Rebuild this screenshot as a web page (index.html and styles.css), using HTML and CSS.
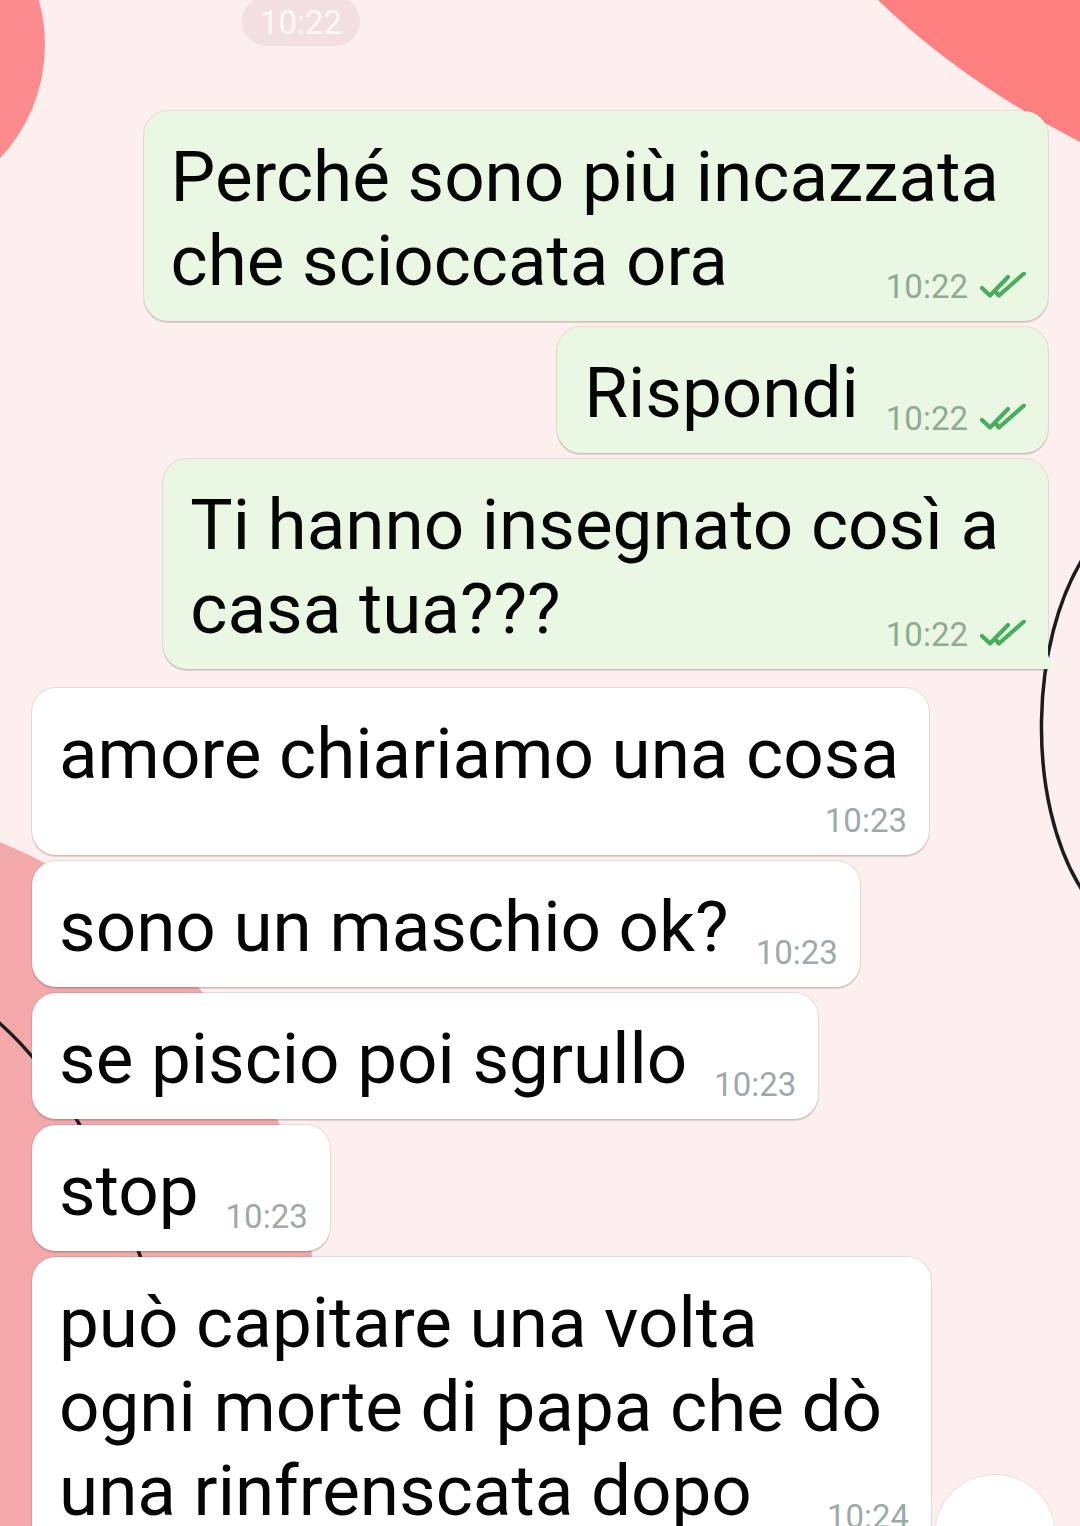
FILE: index.html
```html
<!DOCTYPE html>
<html lang="it">
<head>
<meta charset="utf-8">
<title>Chat</title>
<link rel="stylesheet" href="styles.css">
</head>
<body>
<div class="screen">
  <svg class="wallpaper" width="1080" height="1526" viewBox="0 0 1080 1526" aria-hidden="true">
    <circle cx="-120" cy="45" r="165" fill="#fb8b8c"/>
    <path d="M878 0 Q 960 80 1080 142 L1080 0 Z" fill="#fd7f7f"/>
    <circle cx="-190" cy="1310" r="505" fill="#f3a8a9"/>
    <path d="M1085 555 C1030 640 1025 800 1082 890" stroke="#1c1c1c" stroke-width="3.5" fill="none"/>
    <path d="M-10 1015 Q 95 1100 165 1330" stroke="#1c1c1c" stroke-width="3.5" fill="none"/>
  </svg>

  <div class="chat">
    <div class="date-pill">10:22</div>

    <div class="bubble out">
      <div class="text">Perché sono più incazzata<br>che scioccata ora</div>
      <div class="meta overlap"><span class="time">10:22</span><svg class="ticks" width="46" height="26" viewBox="0 0 46 26"><path d="M2 16 L10 23.5 L28 5" /><path d="M15 19 L19 23.5 L44 1.5" /></svg></div>
    </div>

    <div class="bubble out row">
      <div class="text">Rispondi</div>
      <div class="meta"><span class="time">10:22</span><svg class="ticks" width="46" height="26" viewBox="0 0 46 26"><path d="M2 16 L10 23.5 L28 5" /><path d="M15 19 L19 23.5 L44 1.5" /></svg></div>
    </div>

    <div class="bubble out tail">
      <div class="text">Ti hanno insegnato così a<br>casa tua???</div>
      <div class="meta overlap"><span class="time">10:22</span><svg class="ticks" width="46" height="26" viewBox="0 0 46 26"><path d="M2 16 L10 23.5 L28 5" /><path d="M15 19 L19 23.5 L44 1.5" /></svg></div>
    </div>

    <div class="bubble in group-start">
      <div class="text narrow">amore chiariamo una cosa</div>
      <div class="meta below"><span class="time">10:23</span></div>
    </div>

    <div class="bubble in row">
      <div class="text">sono un maschio ok?</div>
      <div class="meta"><span class="time">10:23</span></div>
    </div>

    <div class="bubble in row">
      <div class="text">se piscio poi sgrullo</div>
      <div class="meta"><span class="time">10:23</span></div>
    </div>

    <div class="bubble in row">
      <div class="text">stop</div>
      <div class="meta"><span class="time">10:23</span></div>
    </div>

    <div class="bubble in">
      <div class="text">può capitare una volta<br>ogni morte di papa che dò<br>una rinfrenscata dopo</div>
      <div class="meta overlap"><span class="time">10:24</span></div>
    </div>
  </div>

  <div class="fab"></div>
</div>
</body>
</html>
```

FILE: styles.css
```css
html, body {
  margin: 0;
  padding: 0;
}

body {
  font-family: Roboto, "Noto Sans", "Liberation Sans", sans-serif;
  color: #050505;
}

.screen {
  position: relative;
  width: 1080px;
  height: 1526px;
  overflow: hidden;
  background: #fdefee;
}

.wallpaper {
  position: absolute;
  left: 0;
  top: 0;
  z-index: 0;
}

.chat {
  position: relative;
  z-index: 1;
  display: flex;
  flex-direction: column;
  gap: 6px;
}

.date-pill {
  align-self: flex-start;
  margin: -4px 0 59px 242px;
  width: 118px;
  height: 50px;
  border-radius: 25px;
  background: #f3dfdf;
  color: #fefafa;
  font-size: 33px;
  line-height: 50px;
  text-align: center;
  padding-top: 2px;
  box-sizing: border-box;
}

.bubble {
  position: relative;
  padding: 24px 22px 18px 27px;
  border-radius: 24px;
  box-shadow: 0 0 0 1px rgba(90, 70, 60, 0.13), 0 1.5px 1px rgba(90, 60, 60, 0.18);
}

.bubble.out {
  align-self: flex-end;
  margin-right: 32px;
  background: #eaf8e3;
}

.bubble.in {
  align-self: flex-start;
  margin-left: 32px;
  background: #ffffff;
}

.bubble.group-start {
  margin-top: 13px;
}

.bubble.row {
  display: flex;
  align-items: flex-end;
}

.text {
  font-size: 71px;
  line-height: 84px;
  white-space: nowrap;
  margin-right: 27px;
}

.text.narrow {
  margin-right: 8px;
}

.meta {
  display: flex;
  align-items: baseline;
  justify-content: flex-end;
  height: 33px;
  line-height: 33px;
  font-size: 33px;
}

.meta.overlap {
  margin-top: -33px;
}

.meta.below {
  margin-top: 8px;
  margin-right: 0;
}

.bubble.out .time {
  color: #8fab91;
}

.bubble.in .time {
  color: #9caaa9;
}

.ticks {
  margin-left: 12px;
  fill: none;
  stroke: #48ad5c;
  stroke-width: 4.2;
  stroke-linecap: round;
  stroke-linejoin: round;
}

.bubble.tail {
  border-bottom-right-radius: 0;
}

.bubble.tail::after {
  content: "";
  position: absolute;
  right: -15px;
  bottom: 0;
  width: 16px;
  height: 20px;
  background: #eaf8e3;
  clip-path: path("M0 0 C1 11 6 17 14 19 Q16 20 14 20 L0 20 Z");
}

.fab {
  position: absolute;
  left: 935px;
  top: 1475px;
  width: 120px;
  height: 120px;
  border-radius: 50%;
  background: #ffffff;
  box-shadow: 0 0 0 1px rgba(120, 90, 90, 0.12);
  z-index: 2;
}
```
